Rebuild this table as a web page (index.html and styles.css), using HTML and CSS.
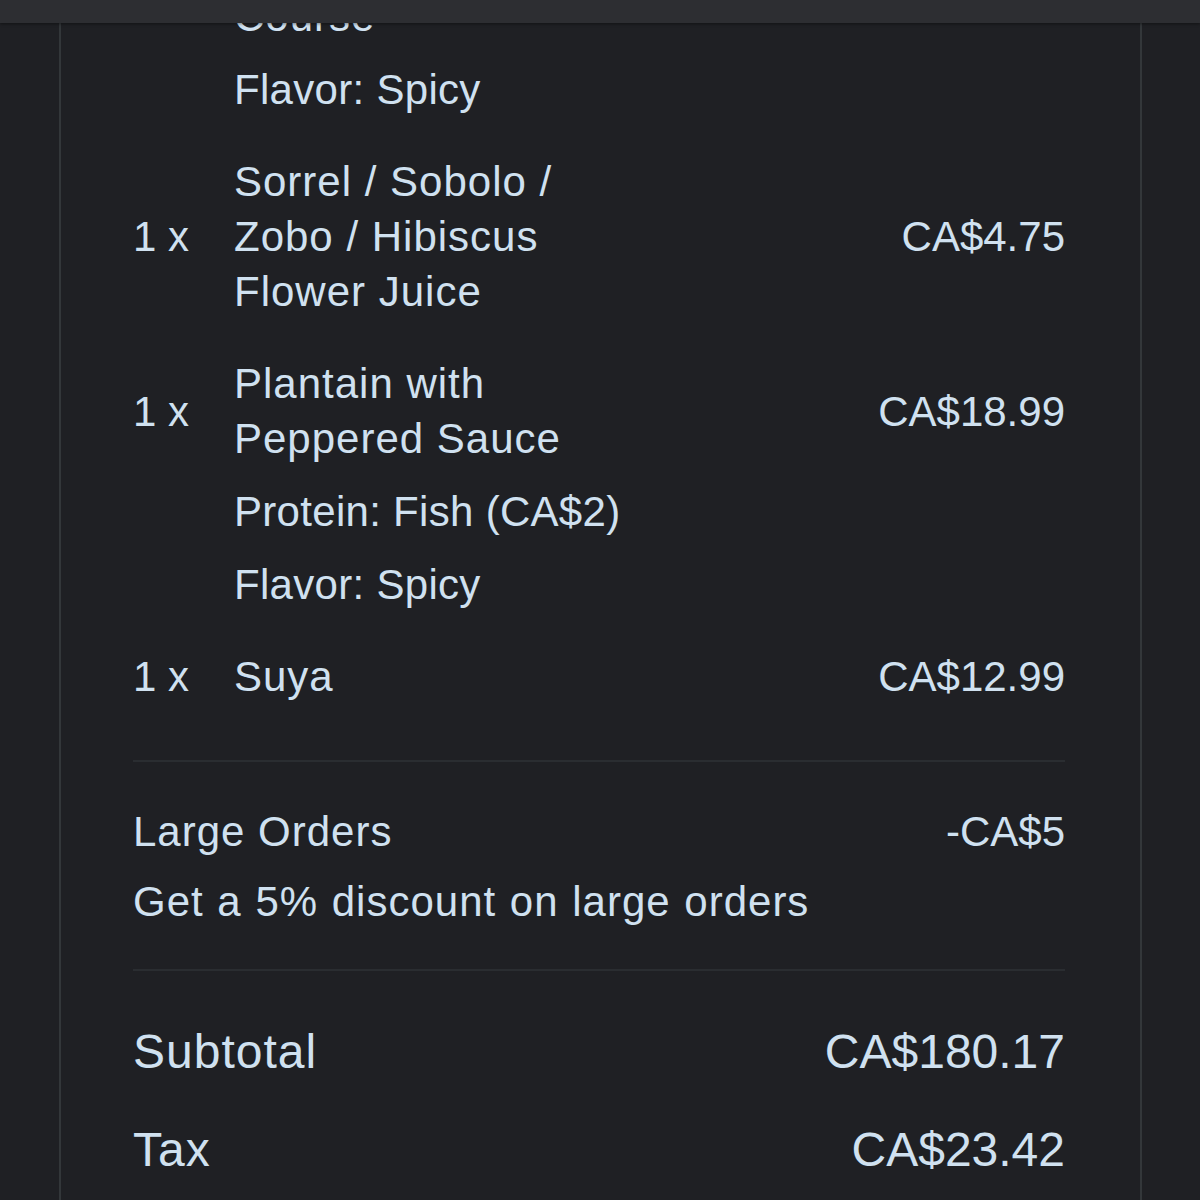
FILE: index.html
```html
<!DOCTYPE html>
<html lang="en">
<head>
    <meta charset="UTF-8">
    <title>Order Receipt</title>
    <meta name="viewport" content="width=device-width, initial-scale=1.0">
    <link rel="stylesheet" href="styles.css">
</head>
<body>

    <div class="topbar"></div>

    <main class="receipt">
        <ul class="items">
            <li class="item">
                <div class="item-row">
                    <span class="qty">1 x</span>
                    <span class="name">Jollof Rice Main Course</span>
                    <span class="price">CA$15.99</span>
                </div>
                <div class="options">
                    <p>Flavor: Spicy</p>
                </div>
            </li>
            <li class="item">
                <div class="item-row">
                    <span class="qty">1 x</span>
                    <span class="name">Sorrel / Sobolo / Zobo / Hibiscus Flower Juice</span>
                    <span class="price">CA$4.75</span>
                </div>
            </li>
            <li class="item">
                <div class="item-row">
                    <span class="qty">1 x</span>
                    <span class="name">Plantain with Peppered Sauce</span>
                    <span class="price">CA$18.99</span>
                </div>
                <div class="options">
                    <p>Protein: Fish (CA$2)</p>
                    <p>Flavor: Spicy</p>
                </div>
            </li>
            <li class="item">
                <div class="item-row">
                    <span class="qty">1 x</span>
                    <span class="name">Suya</span>
                    <span class="price">CA$12.99</span>
                </div>
            </li>
        </ul>

        <hr class="divider divider-items">

        <div class="discount">
            <div class="discount-row">
                <span class="discount-name">Large Orders</span>
                <span class="price">-CA$5</span>
            </div>
            <p class="discount-desc">Get a 5% discount on large orders</p>
        </div>

        <hr class="divider divider-discount">

        <div class="totals">
            <div class="total-row">
                <span class="total-label">Subtotal</span>
                <span>CA$180.17</span>
            </div>
            <div class="total-row">
                <span class="total-label">Tax</span>
                <span>CA$23.42</span>
            </div>
        </div>
    </main>

</body>
</html>
```

FILE: styles.css
```css
html, body {
    overflow: hidden;
}

body {
    margin: 0;
    background-color: #1f2024;
    color: #d0e1f0;
    font-family: 'Liberation Sans', Arial, sans-serif;
}

.topbar {
    position: fixed;
    top: 0;
    left: 0;
    right: 0;
    height: 23px;
    background-color: #2d2e32;
    box-shadow: 0 1px 3px rgba(0, 0, 0, 0.45);
    z-index: 2;
}

.receipt {
    width: 1083px;
    margin-left: 59px;
    box-sizing: border-box;
    border-left: 2px solid #33373a;
    border-right: 2px solid #33373a;
    padding: 1px 75px 200px 72px;
}

.items {
    list-style: none;
    margin: -67px 0 0;
    padding: 0;
    display: flex;
    flex-direction: column;
    gap: 37px;
}

.item-row {
    display: flex;
    align-items: center;
    font-size: 42px;
    line-height: 55px;
}

.qty {
    width: 101px;
    flex: none;
}

.name {
    width: 400px;
    letter-spacing: 1px;
}

.price {
    margin-left: auto;
}

.options p {
    margin: 18px 0 0 101px;
    font-size: 42px;
    line-height: 55px;
    letter-spacing: 0.3px;
}

.divider {
    border: 0;
    height: 2px;
    background-color: #2a2d31;
}

.divider-items {
    margin: 56px 0 42px;
}

.divider-discount {
    margin: 40px 0 51px;
}

.discount-row {
    display: flex;
    align-items: center;
    font-size: 42px;
    line-height: 55px;
}

.discount-name {
    letter-spacing: 1px;
}

.discount-desc {
    margin: 15px 0 0;
    font-size: 42px;
    line-height: 55px;
    letter-spacing: 1px;
    word-spacing: 1px;
}

.totals {
    display: flex;
    flex-direction: column;
    gap: 38px;
}

.total-row {
    display: flex;
    justify-content: space-between;
    font-size: 48px;
    line-height: 60px;
}

.total-label {
    letter-spacing: 1px;
}
```
